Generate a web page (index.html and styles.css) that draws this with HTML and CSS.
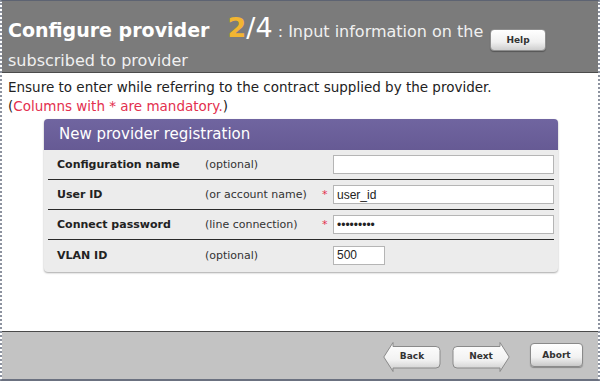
FILE: index.html
```html
<!DOCTYPE html>
<html lang="en">
<head>
<meta charset="UTF-8" />
<title>Configure provider</title>
<link rel="stylesheet" href="styles.css">
</head>
<body>
<div class="frame">
  <div class="header">
    <div class="heading">
      <span class="title">Configure provider</span>
      <span class="step-cur">2</span><span class="step">/4</span>
      <span class="sub">: Input information on the</span><br>
      <span class="sub">subscribed to provider</span>
    </div>
    <button class="help">Help</button>
  </div>

  <div class="content">
    <p class="intro">Ensure to enter while referring to the contract supplied by the provider.<br>
      (<span class="req">Columns with * are mandatory.</span>)</p>

    <div class="panel">
      <div class="panel-title">New provider registration</div>
      <div class="row">
        <span class="label">Configuration name</span>
        <span class="hint">(optional)</span>
        <span class="star"></span>
        <input class="field" type="text" value="">
      </div>
      <div class="row">
        <span class="label">User ID</span>
        <span class="hint">(or account name)</span>
        <span class="star">*</span>
        <input class="field" type="text" value="user_id">
      </div>
      <div class="row">
        <span class="label">Connect password</span>
        <span class="hint">(line connection)</span>
        <span class="star">*</span>
        <input class="field" type="password" value="password1">
      </div>
      <div class="row last">
        <span class="label">VLAN ID</span>
        <span class="hint">(optional)</span>
        <span class="star"></span>
        <input class="field short" type="text" value="500">
      </div>
    </div>
  </div>

  <div class="footer">
    <button class="nav back">
      <svg class="shape" viewBox="0 0 58 30" preserveAspectRatio="none">
        <defs>
          <linearGradient id="gb" x1="0" y1="0" x2="0" y2="1">
            <stop offset="0" stop-color="#ffffff"/>
            <stop offset="0.6" stop-color="#f2f2f2"/>
            <stop offset="1" stop-color="#c9c9c9"/>
          </linearGradient>
        </defs>
        <path d="M10 0.5 L10 4.5 L53 4.5 Q57 4.5 57 8.5 L57 22 Q57 26 53 26 L10 26 L10 29.5 L0.8 15 Z" fill="url(#gb)" stroke="#8a8a8a"/>
      </svg>
      <span>Back</span>
    </button>
    <button class="nav next">
      <svg class="shape" viewBox="0 0 58 30" preserveAspectRatio="none">
        <defs>
          <linearGradient id="gn" x1="0" y1="0" x2="0" y2="1">
            <stop offset="0" stop-color="#ffffff"/>
            <stop offset="0.6" stop-color="#f2f2f2"/>
            <stop offset="1" stop-color="#c9c9c9"/>
          </linearGradient>
        </defs>
        <path d="M48 0.5 L48 4.5 L5 4.5 Q1 4.5 1 8.5 L1 22 Q1 26 5 26 L48 26 L48 29.5 L57.2 15 Z" fill="url(#gn)" stroke="#8a8a8a"/>
      </svg>
      <span>Next</span>
    </button>
    <button class="abort">Abort</button>
  </div>
</div>
</body>
</html>
```

FILE: styles.css
```css
body {
  margin: 0;
  font-family: "DejaVu Sans", Verdana, sans-serif;
  background: #fff;
}
.frame {
  width: 600px;
  height: 381px;
  box-sizing: border-box;
  border-top: 1px solid #5d6372;
  border-left: 2px dotted #8d93a0;
  border-right: 2px dotted #8d93a0;
  border-bottom: 2px solid #6b7180;
  display: flex;
  flex-direction: column;
  background: #fff;
}
.header {
  height: 72px;
  box-sizing: border-box;
  background: #7b7b7b;
  border-bottom: 1px solid #4b4b4b;
  display: flex;
  align-items: flex-start;
  padding: 12px 0 0 6px;
}
.heading {
  width: 478px;
  color: #f0f0f0;
  line-height: 29px;
}
.title {
  font-size: 19px;
  font-weight: bold;
  color: #fff;
  margin-right: 13px;
}
.step,
.step-cur {
  font-size: 27px;
  color: #fff;
}
.step-cur {
  font-weight: bold;
  color: #f2b531;
}
.sub {
  font-size: 16px;
}
.help {
  margin: 16px 0 0 4px;
  width: 56px;
  height: 22px;
  border: 1px solid #8e8e8e;
  border-radius: 4px;
  background: linear-gradient(#ffffff, #f0f0f0 60%, #cfcfcf);
  box-shadow: 0 1px 1px rgba(0,0,0,0.3);
  font: bold 9px "DejaVu Sans", Verdana, sans-serif;
  color: #333;
  padding: 0;
}
.content {
  flex: 1;
  padding: 5px 6px 0;
}
.intro {
  margin: 0;
  font-size: 13.5px;
  line-height: 19px;
  color: #222;
}
.req {
  color: #e3304e;
}
.panel {
  margin: 3px 0 0 36px;
  width: 514px;
  background: #ececec;
  border-radius: 4px;
  box-shadow: 0 1px 2px rgba(0,0,0,0.35);
  padding-bottom: 2px;
}
.panel-title {
  height: 31px;
  box-sizing: border-box;
  background: linear-gradient(#7065a0, #665a94);
  border-radius: 4px 4px 0 0;
  color: #fff;
  font-size: 15px;
  padding: 6px 0 0 15px;
}
.row {
  height: 29px;
  margin: 0 4px;
  border-bottom: 1px solid #2a2a2a;
  display: flex;
  align-items: center;
  font-size: 11px;
  color: #333;
}
.row.last {
  border-bottom: none;
  height: 30px;
}
.label {
  width: 148px;
  padding-left: 9px;
  font-weight: bold;
  color: #222;
}
.hint {
  width: 117px;
}
.star {
  width: 11px;
  color: #e3304e;
  font-size: 11px;
}
.field {
  width: 221px;
  height: 19px;
  box-sizing: border-box;
  border: 1px solid #b5b5b5;
  background: #fff;
  font: 12px "Liberation Sans", Arial, sans-serif;
  color: #222;
  padding: 1px 3px;
}
.field.short {
  width: 52px;
}
.footer {
  height: 48px;
  box-sizing: border-box;
  background: #c3c3c3;
  border-top: 1px solid #4a4a4a;
  display: flex;
  justify-content: flex-end;
  align-items: flex-start;
  gap: 11px;
  padding: 10px 15px 0 0;
}
.nav {
  position: relative;
  width: 58px;
  height: 30px;
  border: none;
  background: none;
  padding: 0;
  font: bold 9px "DejaVu Sans", Verdana, sans-serif;
  color: #333;
}
.nav .shape {
  position: absolute;
  left: 0;
  top: 0;
  width: 58px;
  height: 30px;
}
.nav span {
  position: relative;
  display: block;
  margin-top: -3px;
}
.abort {
  width: 53px;
  height: 24px;
  margin: 1px 0 0 9px;
  border: 1px solid #8a8a8a;
  border-radius: 4px;
  background: linear-gradient(#ffffff, #f2f2f2 60%, #c9c9c9);
  box-shadow: 0 1px 1px rgba(0,0,0,0.3);
  font: bold 9px "DejaVu Sans", Verdana, sans-serif;
  color: #333;
  padding: 0;
}
```
